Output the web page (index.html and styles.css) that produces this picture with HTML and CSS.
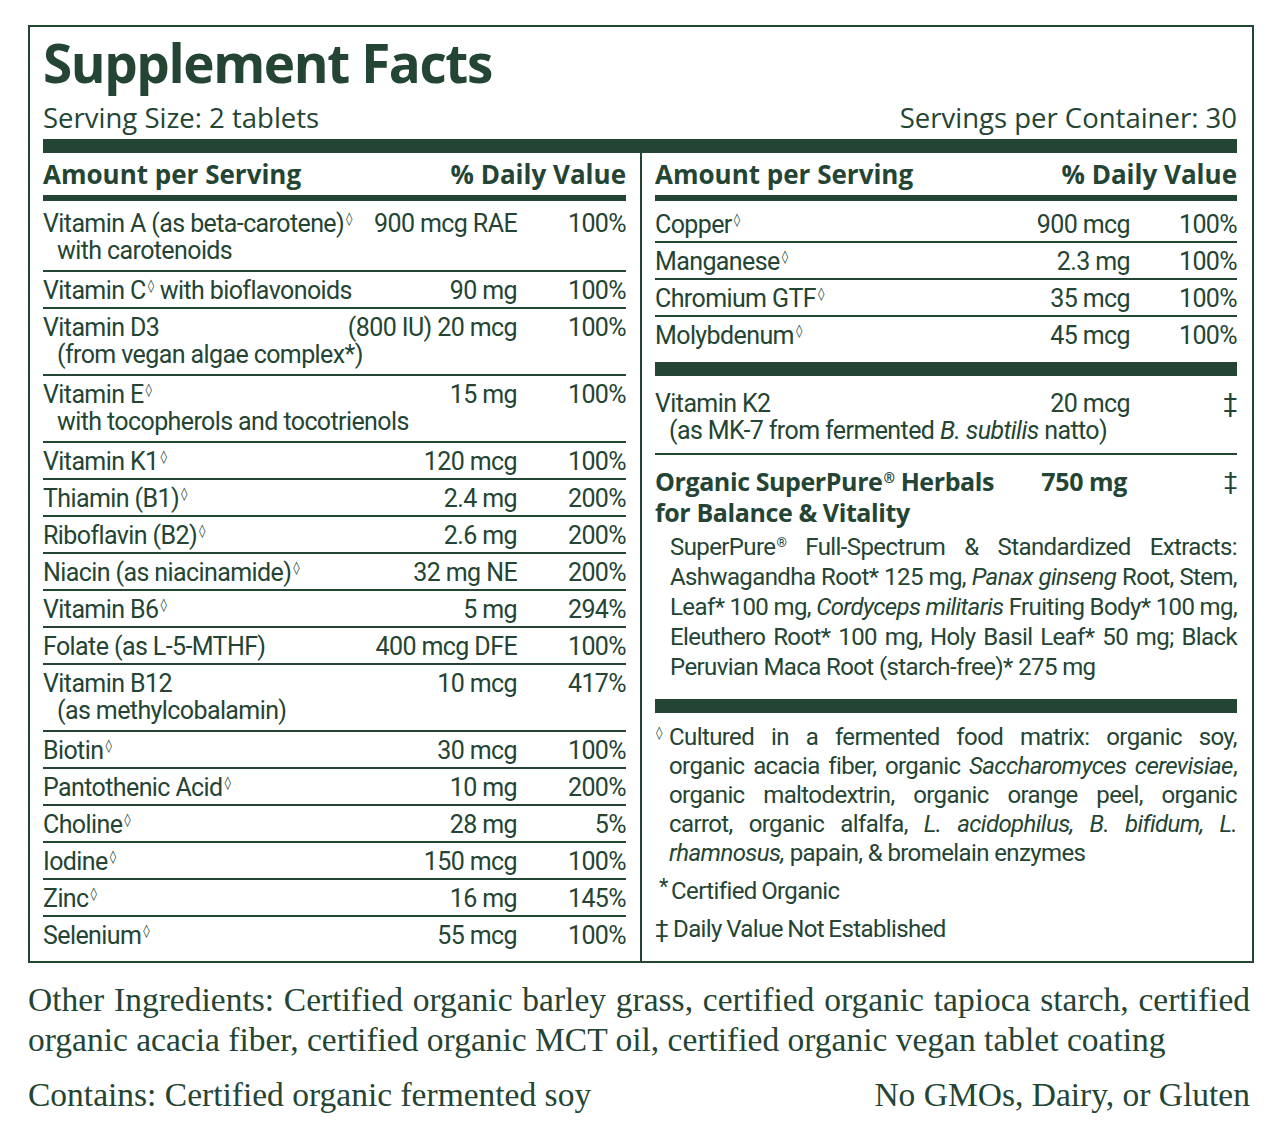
FILE: index.html
```html
<!DOCTYPE html>
<html lang="en">
<head>
<meta charset="utf-8">
<title>Supplement Facts</title>
<link rel="stylesheet" href="styles.css">
</head>
<body>
<main class="page">
  <section class="facts">
    <h1 class="facts-title">Supplement Facts</h1>
    <div class="serving">
      <span>Serving Size: 2 tablets</span>
      <span>Servings per Container: 30</span>
    </div>
    <div class="bar bar-top"></div>
    <div class="cols">
      <div class="col col-left">
        <div class="col-head"><span>Amount per Serving</span><span>% Daily Value</span></div>
        <div class="rows">
          <div class="row"><span class="name">Vitamin A (as beta-carotene)<sup class="dm">◊</sup></span><span class="amt">900 mcg RAE</span><span class="dv">100%</span><span class="sub">with carotenoids</span></div>
          <div class="row"><span class="name">Vitamin C<sup class="dm">◊</sup> with bioflavonoids</span><span class="amt">90 mg</span><span class="dv">100%</span></div>
          <div class="row"><span class="name">Vitamin D3</span><span class="amt">(800 IU) 20 mcg</span><span class="dv">100%</span><span class="sub">(from vegan algae complex*)</span></div>
          <div class="row"><span class="name">Vitamin E<sup class="dm">◊</sup></span><span class="amt">15 mg</span><span class="dv">100%</span><span class="sub">with tocopherols and tocotrienols</span></div>
          <div class="row"><span class="name">Vitamin K1<sup class="dm">◊</sup></span><span class="amt">120 mcg</span><span class="dv">100%</span></div>
          <div class="row"><span class="name">Thiamin (B1)<sup class="dm">◊</sup></span><span class="amt">2.4 mg</span><span class="dv">200%</span></div>
          <div class="row"><span class="name">Riboflavin (B2)<sup class="dm">◊</sup></span><span class="amt">2.6 mg</span><span class="dv">200%</span></div>
          <div class="row"><span class="name">Niacin (as niacinamide)<sup class="dm">◊</sup></span><span class="amt">32 mg NE</span><span class="dv">200%</span></div>
          <div class="row"><span class="name">Vitamin B6<sup class="dm">◊</sup></span><span class="amt">5 mg</span><span class="dv">294%</span></div>
          <div class="row"><span class="name">Folate (as L-5-MTHF)</span><span class="amt">400 mcg DFE</span><span class="dv">100%</span></div>
          <div class="row"><span class="name">Vitamin B12</span><span class="amt">10 mcg</span><span class="dv">417%</span><span class="sub">(as methylcobalamin)</span></div>
          <div class="row"><span class="name">Biotin<sup class="dm">◊</sup></span><span class="amt">30 mcg</span><span class="dv">100%</span></div>
          <div class="row"><span class="name">Pantothenic Acid<sup class="dm">◊</sup></span><span class="amt">10 mg</span><span class="dv">200%</span></div>
          <div class="row"><span class="name">Choline<sup class="dm">◊</sup></span><span class="amt">28 mg</span><span class="dv">5%</span></div>
          <div class="row"><span class="name">Iodine<sup class="dm">◊</sup></span><span class="amt">150 mcg</span><span class="dv">100%</span></div>
          <div class="row"><span class="name">Zinc<sup class="dm">◊</sup></span><span class="amt">16 mg</span><span class="dv">145%</span></div>
          <div class="row end"><span class="name">Selenium<sup class="dm">◊</sup></span><span class="amt">55 mcg</span><span class="dv">100%</span></div>
        </div>
      </div>

      <div class="col col-right">
        <div class="col-head"><span>Amount per Serving</span><span>% Daily Value</span></div>
        <div class="rows">
          <div class="row"><span class="name">Copper<sup class="dm">◊</sup></span><span class="amt">900 mcg</span><span class="dv">100%</span></div>
          <div class="row"><span class="name">Manganese<sup class="dm">◊</sup></span><span class="amt">2.3 mg</span><span class="dv">100%</span></div>
          <div class="row"><span class="name">Chromium GTF<sup class="dm">◊</sup></span><span class="amt">35 mcg</span><span class="dv">100%</span></div>
          <div class="row end"><span class="name">Molybdenum<sup class="dm">◊</sup></span><span class="amt">45 mcg</span><span class="dv">100%</span></div>
        </div>
        <div class="bar bar-mid"></div>
        <div class="row row-k2"><span class="name">Vitamin K2</span><span class="amt">20 mcg</span><span class="dv">‡</span><span class="sub">(as MK-7 from fermented <i>B. subtilis</i> natto)</span></div>

        <div class="herbal-head"><span class="name">Organic SuperPure<sup class="reg">®</sup> Herbals</span><span class="amt">750 mg</span><span class="dv">‡</span><span class="sub">for Balance &amp; Vitality</span></div>
        <p class="herbal-text">
          <span class="ln">SuperPure<sup class="reg">®</sup> Full-Spectrum &amp; Standardized Extracts:</span>
          <span class="ln">Ashwagandha Root* 125 mg, <i>Panax ginseng</i> Root, Stem,</span>
          <span class="ln">Leaf* 100 mg, <i>Cordyceps militaris</i> Fruiting Body* 100 mg,</span>
          <span class="ln">Eleuthero Root* 100 mg, Holy Basil Leaf* 50 mg; Black</span>
          <span class="ln last">Peruvian Maca Root (starch-free)* 275 mg</span>
        </p>
        <div class="bar bar-notes"></div>
        <div class="notes">
          <p class="note"><span class="mark mark-dm">◊</span><span class="note-body">
            <span class="ln">Cultured in a fermented food matrix: organic soy,</span>
            <span class="ln">organic acacia fiber, organic <i>Saccharomyces cerevisiae</i>,</span>
            <span class="ln">organic maltodextrin, organic orange peel, organic</span>
            <span class="ln">carrot, organic alfalfa, <i>L. acidophilus, B. bifidum, L.</i></span>
            <span class="ln last"><i>rhamnosus,</i> papain, &amp; bromelain enzymes</span>
          </span></p>
          <p class="note"><span class="mark mark-star">*</span><span class="note-body">Certified Organic</span></p>
          <p class="note"><span class="mark mark-dd">‡</span><span class="note-body">Daily Value Not Established</span></p>
        </div>
      </div>
    </div>
  </section>

  <p class="other">Other Ingredients: Certified organic barley grass, certified organic tapioca starch, certified organic acacia fiber, certified organic MCT oil, certified organic vegan tablet coating</p>
  <div class="contains">
    <span>Contains: Certified organic fermented soy</span>
    <span>No GMOs, Dairy, or Gluten</span>
  </div>
</main>
</body>
</html>
```

FILE: styles.css
```css
:root {
  --g: #244434;
}

* {
  box-sizing: border-box;
}

body {
  margin: 0;
  background: #ffffff;
  color: var(--g);
}

.page {
  width: 1280px;
  padding: 25px 0 0 28px;
}

.facts {
  width: 1226px;
  border: 2px solid var(--g);
  padding: 8px 15px 0 13px;
}

.facts-title {
  margin: 0;
  font: 700 53px/56px "Open Sans", sans-serif;
  letter-spacing: -1.4px;
}

.serving {
  display: flex;
  justify-content: space-between;
  margin-top: 12px;
  font: 400 27.5px/30px "Open Sans", sans-serif;
}

.bar {
  height: 14px;
  background: var(--g);
}

.bar-top {
  margin-top: 6px;
}

.cols {
  display: grid;
  grid-template-columns: 599px 1fr;
}

.col-left {
  border-right: 2px solid var(--g);
  padding-right: 14px;
  padding-bottom: 9px;
}

.col-right {
  padding-left: 13px;
  padding-bottom: 9px;
}

.col-head {
  display: flex;
  justify-content: space-between;
  padding: 6px 0;
  border-bottom: 6px solid var(--g);
  font: 700 26px/30px "Open Sans", sans-serif;
}

.row {
  display: grid;
  grid-template-columns: 1fr auto 109px;
  padding: 5px 0 3px;
  border-bottom: 2px solid var(--g);
  font: 400 25px/27px Roboto, sans-serif;
  letter-spacing: -0.6px;
}

.col-right .row {
  grid-template-columns: 1fr auto 107px;
}

.col-left .rows .row:first-child {
  padding-top: 9px;
}

.col-right .rows .row:first-child {
  padding-top: 10px;
}

.row.end {
  border-bottom: 0;
}

.amt,
.dv {
  text-align: right;
  white-space: nowrap;
}

.sub {
  grid-column: 1 / -1;
  padding-left: 14px;
  margin-bottom: 3px;
}

.dm {
  font-family: "DejaVu Sans", sans-serif;
  font-size: 13px;
  line-height: 0;
  vertical-align: 9px;
  margin-left: 2px;
  letter-spacing: 0;
}

.reg {
  font-size: 0.55em;
  line-height: 0;
  vertical-align: 0.6em;
  margin-left: 1px;
}

.bar-mid {
  margin-top: 10px;
}

.row-k2 {
  padding: 14px 0 9px;
}

.row-k2 .sub {
  margin-bottom: 0;
}

.herbal-head {
  display: grid;
  grid-template-columns: 1fr auto 107px;
  padding-top: 11px;
  font: 700 25px/31px "Open Sans", sans-serif;
  letter-spacing: -0.4px;
}

.herbal-head .amt {
  padding-right: 3px;
}

.herbal-head .dv {
  font: 400 24px/31px Roboto, sans-serif;
}

.herbal-head .sub {
  padding-left: 0;
  margin-bottom: 0;
}

.herbal-text {
  margin: 4px 0 0;
  padding-left: 15px;
  font: 400 24px/30px Roboto, sans-serif;
  letter-spacing: -0.6px;
  word-spacing: -2px;
}

.ln {
  display: block;
  text-align: justify;
  text-align-last: justify;
}

.ln.last {
  text-align-last: left;
  word-spacing: 0;
}

.bar-notes {
  margin-top: 17px;
}

.notes {
  margin-top: 10px;
  font: 400 24px/29px Roboto, sans-serif;
  letter-spacing: -0.6px;
  word-spacing: -1px;
}

.note {
  display: flex;
  margin: 0;
}

.note + .note {
  margin-top: 9px;
}

.mark {
  flex: 0 0 14px;
}

.mark-dm {
  font-family: "DejaVu Sans", sans-serif;
  font-size: 13px;
  line-height: 20px;
  padding-left: 1px;
}

.mark-star {
  padding-left: 4px;
  font-size: 22px;
  line-height: 20px;
  flex-basis: 16px;
}

.mark-dd {
  flex-basis: 18px;
}

.note-body {
  flex: 1;
}

.other {
  width: 1222px;
  margin: 17px 0 0;
  font: 400 33.5px/40px "Liberation Serif", serif;
  text-align: justify;
}

.contains {
  width: 1222px;
  display: flex;
  justify-content: space-between;
  margin-top: 15px;
  font: 400 33.5px/40px "Liberation Serif", serif;
}
```
